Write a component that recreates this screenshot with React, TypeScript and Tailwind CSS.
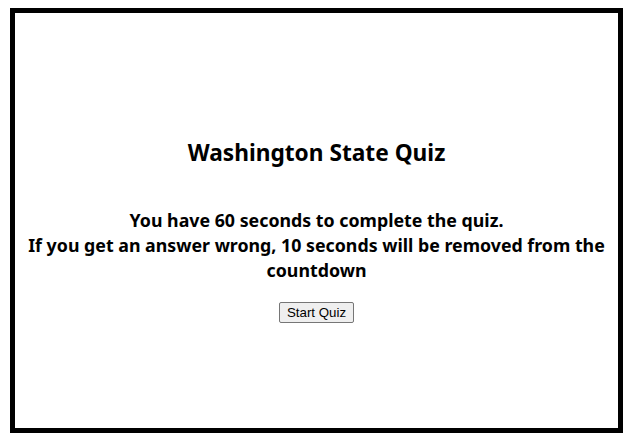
export default function App() {
  return (
    <div className="w-[634px] h-[446px] bg-white pt-[8px] pl-[10px]">
      <div
        className="w-[613px] h-[425px] border-[5px] border-black flex flex-col items-center pt-[125px] text-black"
        style={{ fontFamily: '"Noto Sans", "Open Sans", sans-serif' }}
      >
        <h1 className="text-[22.7px] leading-[30px] font-bold">Washington State Quiz</h1>
        <p className="mt-[40px] text-[17.8px] leading-[25px] font-bold text-center px-2">
          You have 60 seconds to complete the quiz.
          <br />
          If you get an answer wrong, 10 seconds will be removed from the countdown
        </p>
        <button
          className="mt-[19px] h-[21px] px-[7px] bg-[#efefef] border border-[#767676] rounded-[2px] text-[13.3px] leading-none text-black"
          style={{ fontFamily: '"Liberation Sans", Arial, sans-serif' }}
        >
          Start Quiz
        </button>
      </div>
    </div>
  );
}
